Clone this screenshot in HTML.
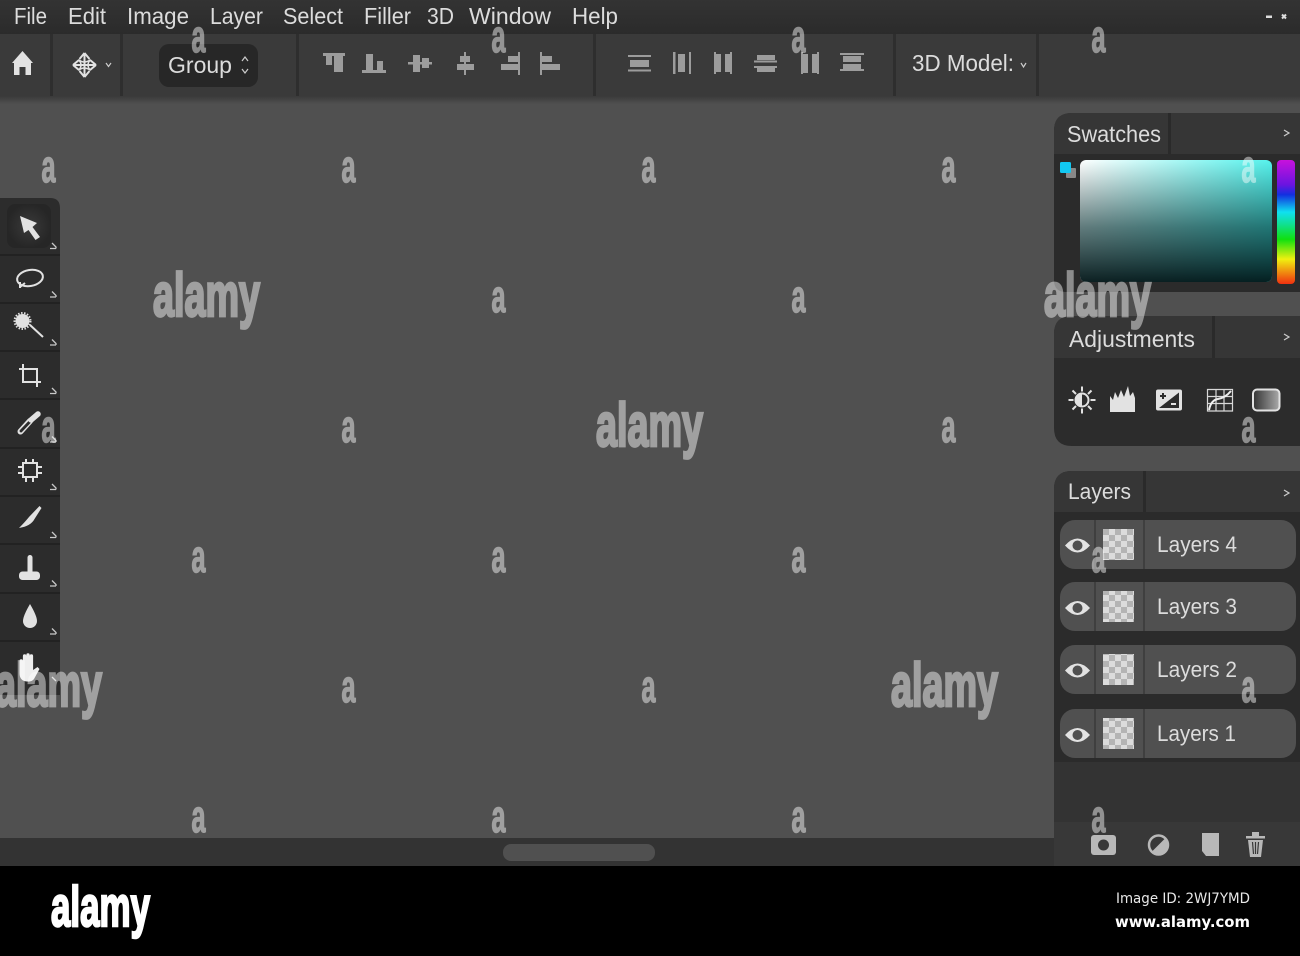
<!DOCTYPE html>
<html><head><meta charset="utf-8"><title>Editor</title>
<style>html,body{margin:0;padding:0;background:#000;width:1300px;height:956px;overflow:hidden}svg{display:block}
text{font-family:"Liberation Sans",sans-serif;fill:#dcdcdc}
.m{font-size:23px}.w{font-family:"Liberation Sans",sans-serif;font-weight:700;fill:#fff;stroke:#fff;opacity:.46}
.i{fill:#9c9c9c}.t{fill:#e2e2e2}.s{fill:none;stroke:#e2e2e2;stroke-width:2}
.c{fill:none;stroke:#ccc;stroke-width:1.2}</style></head><body>
<svg width="1300" height="956" viewBox="0 0 1300 956" xmlns="http://www.w3.org/2000/svg">
<defs>
<linearGradient id="sh" x1="0" y1="0" x2="0" y2="1"><stop offset="0" stop-color="#343434"/><stop offset="1" stop-color="#505050"/></linearGradient>
<linearGradient id="top" x1="0" y1="0" x2="0" y2="1"><stop offset="0" stop-color="#333"/><stop offset="1" stop-color="#2b2b2b"/></linearGradient>
<linearGradient id="fh" x1="0" y1="0" x2="1" y2="0"><stop offset="0" stop-color="#fff"/><stop offset="1" stop-color="#55f2ec"/></linearGradient>
<linearGradient id="fv" x1="0" y1="0" x2="0" y2="1"><stop offset="0" stop-color="#002a2c" stop-opacity="0"/><stop offset=".55" stop-color="#002a2c" stop-opacity=".62"/><stop offset="1" stop-color="#001416" stop-opacity=".95"/></linearGradient>
<linearGradient id="hue" x1="0" y1="0" x2="0" y2="1"><stop offset="0" stop-color="#c812dc"/><stop offset=".2" stop-color="#6a14e0"/><stop offset=".28" stop-color="#1230e0"/><stop offset=".42" stop-color="#10e0f0"/><stop offset=".52" stop-color="#10e090"/><stop offset=".64" stop-color="#10e010"/><stop offset=".8" stop-color="#f0f010"/><stop offset="1" stop-color="#f03010"/></linearGradient>
<linearGradient id="gr" x1="0" y1="0" x2="1" y2="0"><stop offset="0" stop-color="#333"/><stop offset="1" stop-color="#aaa"/></linearGradient>
<radialGradient id="sel"><stop offset="0" stop-color="#3a3a3a"/><stop offset="1" stop-color="#262626"/></radialGradient>
<pattern id="ck" width="12" height="12" patternUnits="userSpaceOnUse" x="1103" y="529"><rect width="12" height="12" fill="#dcdcdc"/><rect width="6" height="6" fill="#b4b4b4"/><rect x="6" y="6" width="6" height="6" fill="#b4b4b4"/></pattern>
</defs>

<!-- base -->
<rect width="1300" height="956" fill="#000"/>
<rect width="1300" height="866" fill="#505050"/>
<rect y="94" width="1300" height="10" fill="url(#sh)"/>
<rect width="1300" height="34" fill="url(#top)"/>
<rect y="34" width="1300" height="62" fill="#3a3a3a"/>
<g fill="#2e2e2e"><rect x="50" y="34" width="3" height="62"/><rect x="120" y="34" width="3" height="62"/><rect x="296" y="34" width="3" height="62"/><rect x="593" y="34" width="3" height="62"/><rect x="893" y="34" width="3" height="62"/><rect x="1036" y="34" width="3" height="62"/></g>

<!-- menu -->
<g class="m">
<text x="14" y="24" textLength="33" lengthAdjust="spacingAndGlyphs">File</text>
<text x="68" y="24" textLength="38" lengthAdjust="spacingAndGlyphs">Edit</text>
<text x="127" y="24" textLength="62" lengthAdjust="spacingAndGlyphs">Image</text>
<text x="210" y="24" textLength="53" lengthAdjust="spacingAndGlyphs">Layer</text>
<text x="283" y="24" textLength="60" lengthAdjust="spacingAndGlyphs">Select</text>
<text x="364" y="24" textLength="47" lengthAdjust="spacingAndGlyphs">Filler</text>
<text x="427" y="24" textLength="27" lengthAdjust="spacingAndGlyphs">3D</text>
<text x="469" y="24" textLength="82" lengthAdjust="spacingAndGlyphs">Window</text>
<text x="572" y="24" textLength="46" lengthAdjust="spacingAndGlyphs">Help</text>
</g>
<rect x="1266" y="15.500" width="6" height="2.500" fill="#ddd"/>
<path d="M1282 14.500l4 4M1286 14.500l-4 4" stroke="#ddd" stroke-width="2"/>

<!-- home -->
<path class="t" d="M22.500 51 L33 63 H31 V75 H25.500 V67 H19.500 V75 H14 V63 H12 Z"/>
<!-- move -->
<g fill="none" stroke="#e2e2e2" stroke-width="2" stroke-linejoin="round"><path d="M73 65H96M84.500 53V77"/><path d="M84.500 53l-5 6M84.500 53l5 6M84.500 77l-5-6M84.500 77l5-6M73 65l6-5M73 65l6 5M96 65l-6-5M96 65l-6 5"/><path d="M79 60Q84 64 90 60Q86 65 90 70Q84 66 79 70Q83 65 79 60Z" stroke-width="1.500"/></g>
<path class="c" d="M106 63l2.500 3.500 2.500-3.500"/>
<!-- group -->
<rect x="159" y="44" width="99" height="43" rx="10" fill="#272727"/>
<text x="168" y="73" font-size="23" textLength="64" lengthAdjust="spacingAndGlyphs">Group</text>
<path class="c" d="M242 61l3-4 3 4M242 69l3 4 3-4"/>

<!-- align icons -->
<g class="i">
<rect x="323" y="53" width="22" height="3"/><rect x="326" y="56" width="6" height="9"/><rect x="334" y="56" width="9" height="16"/>
<rect x="362" y="70" width="24" height="3"/><rect x="366" y="54" width="7" height="16"/><rect x="377" y="61" width="6" height="9"/>
<rect x="408" y="62" width="24" height="2.500"/><rect x="413" y="55" width="7" height="17"/><rect x="422" y="58" width="7" height="10"/>
<rect x="464" y="52" width="2" height="23"/><rect x="460" y="56" width="10" height="6"/><rect x="457" y="64" width="17" height="6"/>
<rect x="518" y="52" width="2" height="23"/><rect x="508" y="56" width="10" height="6"/><rect x="501" y="64" width="17" height="6"/>
<rect x="540" y="52" width="2" height="23"/><rect x="542" y="56" width="10" height="6"/><rect x="542" y="64" width="18" height="6"/>
<rect x="628" y="55" width="23" height="2"/><rect x="630" y="60" width="19" height="7"/><rect x="628" y="69.500" width="23" height="2"/>
<rect x="673" y="52" width="2.500" height="22"/><rect x="678" y="54" width="7" height="18"/><rect x="689" y="52" width="2" height="22"/>
<rect x="714" y="52" width="2" height="22"/><rect x="714" y="54" width="7" height="18"/><rect x="725" y="54" width="7" height="18"/><rect x="730" y="52" width="2" height="22"/>
<rect x="757" y="55" width="18" height="5"/><rect x="754" y="60.500" width="23" height="2"/><rect x="754" y="66" width="23" height="2"/><rect x="757" y="68" width="18" height="4"/>
<rect x="801" y="54" width="7" height="19"/><rect x="801" y="52" width="2" height="22"/><rect x="812" y="54" width="6" height="19"/><rect x="817" y="52" width="2" height="22"/>
<rect x="840" y="53" width="24" height="2"/><rect x="843" y="56" width="18" height="6"/><rect x="843" y="64" width="18" height="5"/><rect x="840" y="69" width="24" height="2"/>
</g>
<text x="912" y="71" font-size="23" textLength="102" lengthAdjust="spacingAndGlyphs">3D Model:</text>
<path class="c" d="M1021 63l2.500 4 2.500-4"/>

<!-- left tools -->
<path d="M0 198H50Q60 198 60 208V695H0Z" fill="#2c2c2c"/>
<g fill="#222"><rect y="254" width="60" height="2"/><rect y="302" width="60" height="2"/><rect y="350" width="60" height="2"/><rect y="398" width="60" height="2"/><rect y="447" width="60" height="2"/><rect y="495" width="60" height="2"/><rect y="543" width="60" height="2"/><rect y="592" width="60" height="2"/><rect y="640" width="60" height="2"/></g>
<rect x="7" y="204" width="44" height="44" rx="8" fill="url(#sel)"/>
<path class="t" d="M20 216L37 223 32.500 227 40 237 35.500 240 28.500 230 24 233Z"/>
<ellipse cx="30" cy="278" rx="13" ry="8" transform="rotate(-10 30 278)" class="s"/><path class="s" d="M20 282v6M20 287l5-4"/>
<circle cx="22.500" cy="321" r="7" class="t"/><circle cx="22.500" cy="321" r="8" fill="none" stroke="#e2e2e2" stroke-width="2" stroke-dasharray="1.500 1.500"/><path class="s" d="M30 325L43 337"/>
<path class="s" d="M23 364V382H41M19 369H37V387"/>
<path d="M20.500 431.500L30 421" fill="none" stroke="#e2e2e2" stroke-width="6" stroke-linecap="round"/><path d="M21 431L30 421.500" fill="none" stroke="#2c2c2c" stroke-width="2.800" stroke-linecap="round"/><path d="M31 420L38 414" fill="none" stroke="#e2e2e2" stroke-width="5.500" stroke-linecap="round"/>
<path class="s" d="M23 463H37V477H23ZM26 459V463M33 459V463M26 477V482M33 477V482M18 467H23M18 473H23M37 467H42M37 473H42"/>
<path class="t" d="M39.500 506L41.500 508 34.500 519Q31 526 19 528 25 522 29 517Z"/>
<rect x="27.500" y="555" width="5" height="19" rx="2.500" class="t"/><rect x="19" y="571.500" width="21" height="8.500" rx="3.500" class="t"/>
<path class="t" d="M30 604Q37 616 37 621A7 7 0 0 1 23 621Q23 616 30 604Z"/>
<path d="M19.500 661a1.700 1.700 0 0 1 3.400 0V656a1.700 1.700 0 0 1 3.400 0V655a1.700 1.700 0 0 1 3.400 0V656a1.700 1.700 0 0 1 3.400 0V670L37.500 667 39.500 669 34 679Q32 682 27 681.500 19.500 681 19.500 673Z" fill="#eee"/>
<g fill="none" stroke="#c8c8c8" stroke-width="1.300"><path d="M52 243l4 4v1.500M50 248.500h6"/><path d="M52 291.500l4 4v1.500M50 297h6"/><path d="M52 339.500l4 4v1.500M50 345h6"/><path d="M52 388l4 4v1.500M50 393.500h6"/><path d="M52 436.500l4 4v1.500M50 442h6"/><path d="M52 484l4 4v1.500M50 489.500h6"/><path d="M52 532l4 4v1.500M50 537.500h6"/><path d="M52 580.500l4 4v1.500M50 586h6"/><path d="M52 628.500l4 4v1.500M50 634h6"/><path d="M52 677l4 4"/></g>

<!-- swatches -->
<path d="M1300 113H1072Q1054 113 1054 131V280Q1054 292 1066 292H1300Z" fill="#2b2b2b"/>
<path d="M1300 113H1072Q1054 113 1054 131V154H1300Z" fill="#363636"/>
<rect x="1168" y="113" width="3" height="41" fill="#2a2a2a"/>
<text x="1067" y="142" font-size="23" textLength="94" lengthAdjust="spacingAndGlyphs">Swatches</text>
<path class="c" d="M1284 130l5 3-5 3"/>
<rect x="1066" y="168" width="10" height="10" rx="1" fill="#888"/>
<rect x="1060" y="162" width="11" height="11" rx="1.500" fill="#12c8f2"/>
<rect x="1080" y="160" width="192" height="122" rx="6" fill="url(#fh)"/>
<rect x="1080" y="160" width="192" height="122" rx="6" fill="url(#fv)"/>
<rect x="1277" y="160" width="18" height="124" rx="4" fill="url(#hue)"/>

<!-- adjustments -->
<path d="M1300 316H1072Q1054 316 1054 334V428Q1054 446 1072 446H1300Z" fill="#2c2c2c"/>
<path d="M1300 316H1072Q1054 316 1054 334V358H1300Z" fill="#363636"/>
<rect x="1212" y="316" width="3" height="42" fill="#2a2a2a"/>
<text x="1069" y="347" font-size="23" textLength="126" lengthAdjust="spacingAndGlyphs">Adjustments</text>
<path class="c" d="M1284 334l5 3-5 3"/>
<circle cx="1082" cy="400" r="6.500" fill="#2c2c2c" stroke="#e2e2e2" stroke-width="2"/><path class="t" d="M1082 394a6 6 0 0 0 0 12z"/>
<path class="s" d="M1082 386.500v5M1082 408.500v5M1068.500 400h5M1090.500 400h5M1072.500 390.500l3.500 3.500M1091.500 390.500l-3.500 3.500M1072.500 409.500l3.500-3.500M1091.500 409.500l-3.500-3.500"/>
<path class="t" d="M1110 412V396L1113 400 1115 392 1118 398 1121 390 1124 397 1128 386 1130 396 1133 392 1135 398V412Z"/>
<rect x="1156" y="389.500" width="26" height="21" rx="2" class="t"/><path d="M1159 408L1179 392.500V408Z" fill="#2c2c2c"/>
<path d="M1160 396h6M1163 393v6" stroke="#2c2c2c" stroke-width="2"/><path d="M1171 404h5" stroke="#e2e2e2" stroke-width="2"/>
<path d="M1207.500 389.500H1232.500V411H1207.500ZM1207.500 396.500H1232.500M1207.500 403.500H1232.500M1216 389.500V411M1224 389.500V411" fill="none" stroke="#d8d8d8" stroke-width="1.200"/>
<path d="M1209 410Q1211 400 1218 399T1231 391" fill="none" stroke="#eee" stroke-width="2"/>
<rect x="1253" y="389.500" width="26.500" height="21" rx="4" fill="url(#gr)" stroke="#e2e2e2" stroke-width="2"/>

<!-- layers -->
<path d="M1300 471H1072Q1054 471 1054 489V866H1300Z" fill="#2b2b2b"/>
<path d="M1300 471H1072Q1054 471 1054 489V512H1300Z" fill="#363636"/>
<rect x="1143" y="471" width="3" height="41" fill="#2a2a2a"/>
<rect x="1054" y="762" width="246" height="60" fill="#333"/>
<rect x="1054" y="822" width="246" height="44" fill="#383838"/>
<text x="1068" y="499" font-size="22" textLength="63" lengthAdjust="spacingAndGlyphs">Layers</text>
<path class="c" d="M1284 490l5 3-5 3"/>

<g>
<rect x="1060" y="520" width="236" height="49" rx="15" fill="#505050"/>
<rect x="1060" y="582" width="236" height="49" rx="15" fill="#505050"/>
<rect x="1060" y="645" width="236" height="49" rx="15" fill="#505050"/>
<rect x="1060" y="709" width="236" height="49" rx="15" fill="#505050"/>
</g>
<g fill="#3f3f3f">
<rect x="1094" y="520" width="2" height="49"/><rect x="1143" y="520" width="2" height="49"/>
<rect x="1094" y="582" width="2" height="49"/><rect x="1143" y="582" width="2" height="49"/>
<rect x="1094" y="645" width="2" height="49"/><rect x="1143" y="645" width="2" height="49"/>
<rect x="1094" y="709" width="2" height="49"/><rect x="1143" y="709" width="2" height="49"/>
</g>
<g fill="#e2e2e2">
<path d="M1065 545.500Q1077.500 531.500 1090 545.500 1077.500 559.500 1065 545.500Z"/>
<path d="M1065 608Q1077.500 594 1090 608 1077.500 622 1065 608Z"/>
<path d="M1065 670.500Q1077.500 656.500 1090 670.500 1077.500 684.500 1065 670.500Z"/>
<path d="M1065 735Q1077.500 721 1090 735 1077.500 749 1065 735Z"/>
</g>
<g fill="#505050"><circle cx="1077.500" cy="545.500" r="5"/><circle cx="1077.500" cy="608" r="5"/><circle cx="1077.500" cy="670.500" r="5"/><circle cx="1077.500" cy="735" r="5"/></g>
<rect x="1103" y="529" width="31" height="31" fill="url(#ck)"/>
<rect x="1103" y="591" width="31" height="31" fill="url(#ck)"/>
<rect x="1103" y="654" width="31" height="31" fill="url(#ck)"/>
<rect x="1103" y="718" width="31" height="31" fill="url(#ck)"/>
<text x="1157" y="552" font-size="22" textLength="80" lengthAdjust="spacingAndGlyphs">Layers 4</text>
<text x="1157" y="614" font-size="22" textLength="80" lengthAdjust="spacingAndGlyphs">Layers 3</text>
<text x="1157" y="677" font-size="22" textLength="80" lengthAdjust="spacingAndGlyphs">Layers 2</text>
<text x="1157" y="741" font-size="22" textLength="79" lengthAdjust="spacingAndGlyphs">Layers 1</text>

<!-- footer icons -->
<rect x="1091" y="835" width="25" height="20" rx="3" fill="#b8b8b8"/><circle cx="1103.500" cy="845" r="5.500" fill="#383838"/>
<circle cx="1158.500" cy="845" r="9.500" fill="none" stroke="#b8b8b8" stroke-width="2.500"/><path d="M1151.500 852A9.500 9.500 0 0 0 1165.500 838Z" fill="#b8b8b8"/>
<path d="M1202 833H1219V856H1206L1202 851Z" fill="#b8b8b8"/>
<path d="M1246 836H1265V838.500H1246ZM1252 836V832H1259V836" fill="#b8b8b8"/><path d="M1248 840L1250 857H1261L1263 840Z" fill="#b8b8b8"/><path d="M1252.500 842L1253.500 854M1255.500 842V854M1258.500 842L1257.500 854" stroke="#383838" stroke-width="1.200"/>

<!-- bottom bar -->
<rect y="838" width="1054" height="28" fill="#333"/>
<rect x="503" y="844" width="152" height="17" rx="8" fill="#505050"/>

<!-- watermarks -->
<g stroke-width="2.800">
<text class="w" x="153" y="316" font-size="61" textLength="107" lengthAdjust="spacingAndGlyphs">alamy</text>
<text class="w" x="596" y="446" font-size="61" textLength="107" lengthAdjust="spacingAndGlyphs">alamy</text>
<text class="w" x="1044" y="316" font-size="61" textLength="107" lengthAdjust="spacingAndGlyphs">alamy</text>
<text class="w" x="891" y="706" font-size="61" textLength="107" lengthAdjust="spacingAndGlyphs">alamy</text>
<text class="w" x="-5" y="706" font-size="61" textLength="107" lengthAdjust="spacingAndGlyphs">alamy</text>
</g>
<g stroke-width="1.400">
<text class="w" x="191.500" y="52" font-size="45" textLength="14" lengthAdjust="spacingAndGlyphs">a</text>
<text class="w" x="491.500" y="52" font-size="45" textLength="14" lengthAdjust="spacingAndGlyphs">a</text>
<text class="w" x="791.500" y="52" font-size="45" textLength="14" lengthAdjust="spacingAndGlyphs">a</text>
<text class="w" x="1091.500" y="52" font-size="45" textLength="14" lengthAdjust="spacingAndGlyphs">a</text>
<text class="w" x="41.500" y="182" font-size="45" textLength="14" lengthAdjust="spacingAndGlyphs">a</text>
<text class="w" x="341.500" y="182" font-size="45" textLength="14" lengthAdjust="spacingAndGlyphs">a</text>
<text class="w" x="641.500" y="182" font-size="45" textLength="14" lengthAdjust="spacingAndGlyphs">a</text>
<text class="w" x="941.500" y="182" font-size="45" textLength="14" lengthAdjust="spacingAndGlyphs">a</text>
<text class="w" x="1241.500" y="182" font-size="45" textLength="14" lengthAdjust="spacingAndGlyphs">a</text>
<text class="w" x="491.500" y="312" font-size="45" textLength="14" lengthAdjust="spacingAndGlyphs">a</text>
<text class="w" x="791.500" y="312" font-size="45" textLength="14" lengthAdjust="spacingAndGlyphs">a</text>
<text class="w" x="41.500" y="442" font-size="45" textLength="14" lengthAdjust="spacingAndGlyphs">a</text>
<text class="w" x="341.500" y="442" font-size="45" textLength="14" lengthAdjust="spacingAndGlyphs">a</text>
<text class="w" x="941.500" y="442" font-size="45" textLength="14" lengthAdjust="spacingAndGlyphs">a</text>
<text class="w" x="1241.500" y="442" font-size="45" textLength="14" lengthAdjust="spacingAndGlyphs">a</text>
<text class="w" x="191.500" y="572" font-size="45" textLength="14" lengthAdjust="spacingAndGlyphs">a</text>
<text class="w" x="491.500" y="572" font-size="45" textLength="14" lengthAdjust="spacingAndGlyphs">a</text>
<text class="w" x="791.500" y="572" font-size="45" textLength="14" lengthAdjust="spacingAndGlyphs">a</text>
<text class="w" x="1091.500" y="572" font-size="45" textLength="14" lengthAdjust="spacingAndGlyphs">a</text>
<text class="w" x="341.500" y="702" font-size="45" textLength="14" lengthAdjust="spacingAndGlyphs">a</text>
<text class="w" x="641.500" y="702" font-size="45" textLength="14" lengthAdjust="spacingAndGlyphs">a</text>
<text class="w" x="1241.500" y="702" font-size="45" textLength="14" lengthAdjust="spacingAndGlyphs">a</text>
<text class="w" x="191.500" y="832" font-size="45" textLength="14" lengthAdjust="spacingAndGlyphs">a</text>
<text class="w" x="491.500" y="832" font-size="45" textLength="14" lengthAdjust="spacingAndGlyphs">a</text>
<text class="w" x="791.500" y="832" font-size="45" textLength="14" lengthAdjust="spacingAndGlyphs">a</text>
<text class="w" x="1091.500" y="832" font-size="45" textLength="14" lengthAdjust="spacingAndGlyphs">a</text>
</g>

<!-- footer strip -->
<text x="51" y="926" font-size="57" font-weight="700" textLength="99" lengthAdjust="spacingAndGlyphs" style="fill:#fff;stroke:#fff;stroke-width:2.500">alamy</text>
<text x="1116" y="903" font-size="14" textLength="134" lengthAdjust="spacingAndGlyphs" style="font-family:'DejaVu Sans',sans-serif;fill:#e8e8e8">Image ID: 2WJ7YMD</text>
<text x="1115" y="927" font-size="15" font-weight="700" textLength="135" lengthAdjust="spacingAndGlyphs" style="font-family:'DejaVu Sans',sans-serif;fill:#fff">www.alamy.com</text>
</svg>
</body></html>
